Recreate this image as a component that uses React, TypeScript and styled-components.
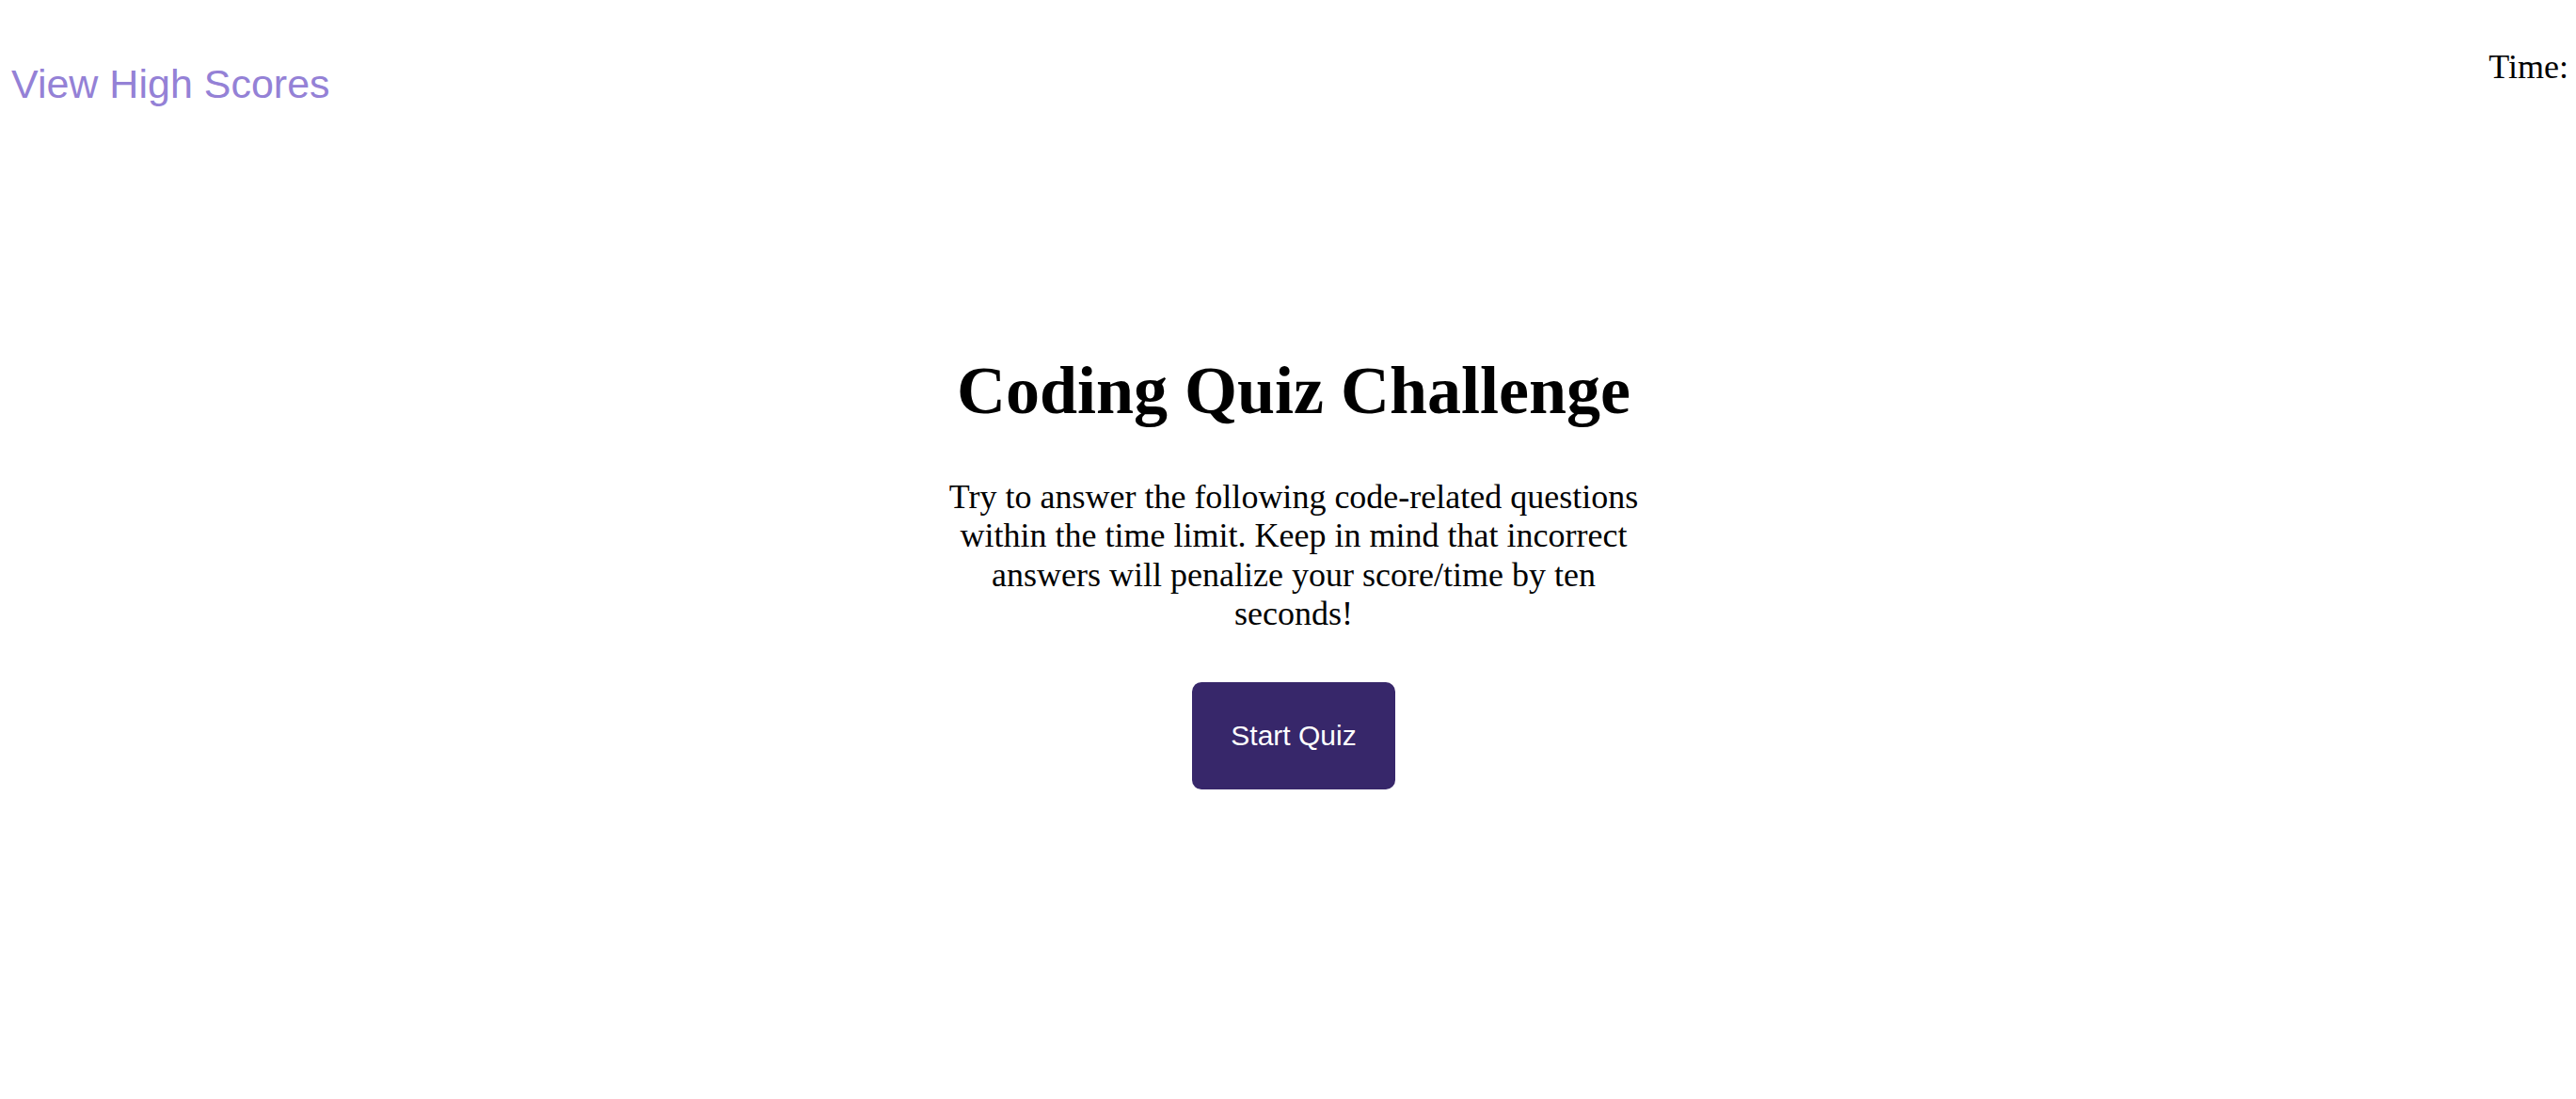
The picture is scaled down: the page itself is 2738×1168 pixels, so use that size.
import React from "react";
import styled, { createGlobalStyle } from "styled-components";

const GlobalStyle = createGlobalStyle`
  html, body {
    margin: 0;
    padding: 0;
    background: #ffffff;
  }
  body {
    font-family: "Liberation Serif", "Times New Roman", serif;
    color: #000000;
  }
`;

const Page = styled.div`
  padding-left: 12px;
  min-height: 1168px;
  box-sizing: border-box;
`;

const Header = styled.header`
  display: flex;
  justify-content: space-between;
  align-items: flex-start;
  padding: 51px 8px 0 0;
`;

const HighScoresLink = styled.a`
  margin-top: 13px;
  font-family: "Liberation Sans", Arial, Helvetica, sans-serif;
  font-size: 43px;
  line-height: 50px;
  color: #9481d6;
  text-decoration: none;
  cursor: pointer;
`;

const Timer = styled.div`
  font-family: "Liberation Serif", "Times New Roman", serif;
  font-size: 36px;
  line-height: 41px;
  color: #000000;
`;

const Main = styled.main`
  display: flex;
  flex-direction: column;
  align-items: center;
  margin-top: 260px;
  text-align: center;
`;

const Title = styled.h1`
  margin: 0;
  font-family: "Liberation Serif", "Times New Roman", serif;
  font-weight: 700;
  font-size: 72px;
  line-height: 83px;
`;

const Intro = styled.p`
  margin: 51px 0 51px;
  width: 750px;
  font-family: "Liberation Serif", "Times New Roman", serif;
  font-size: 36px;
  line-height: 41.4px;
`;

const StartButton = styled.button`
  border: none;
  border-radius: 10px;
  background: #37276a;
  color: #ffffff;
  font-family: "Liberation Sans", Arial, Helvetica, sans-serif;
  font-size: 30px;
  line-height: 34px;
  padding: 40px 41px;
  cursor: pointer;
`;

export default function App() {
  return (
    <>
      <GlobalStyle />
      <Page>
        <Header>
          <HighScoresLink>View High Scores</HighScoresLink>
          <Timer>Time:</Timer>
        </Header>
        <Main>
          <Title>Coding Quiz Challenge</Title>
          <Intro>
            Try to answer the following code-related questions within the time
            limit. Keep in mind that incorrect answers will penalize your
            score/time by ten seconds!
          </Intro>
          <StartButton>Start Quiz</StartButton>
        </Main>
      </Page>
    </>
  );
}
